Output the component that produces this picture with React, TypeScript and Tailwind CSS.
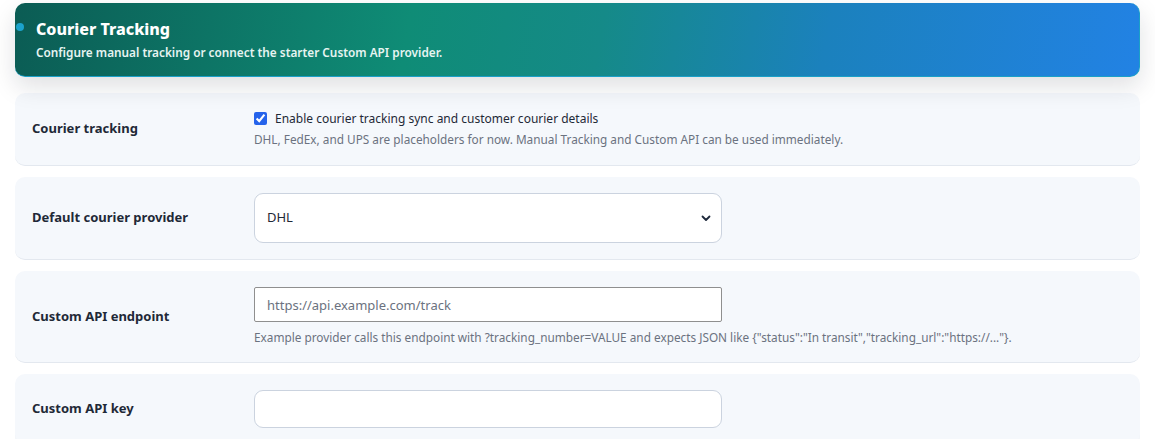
import { useState } from 'react';

const font = { fontFamily: '"Segoe UI", "Noto Sans", "Open Sans", sans-serif' };

function Row({ label, children }: { label: string; children: React.ReactNode }) {
  return (
    <div className="grid grid-cols-[222px_1fr] items-center rounded-[10px] bg-[#f5f8fc] border-b border-[#e3e8ef] px-[17px] py-4">
      <div className="text-[13px] font-bold text-[#1f2937]">{label}</div>
      <div>{children}</div>
    </div>
  );
}

export default function App() {
  const [enabled, setEnabled] = useState(true);
  const [provider, setProvider] = useState('DHL');

  return (
    <div style={font} className="min-h-[439px] bg-white px-[15px] pt-[3px] pb-6">
      <div className="relative rounded-[10px] border-r border-b border-[#1aa0c8] bg-[linear-gradient(100deg,#0b5c54_0%,#0f8c76_35%,#158a88_52%,#1b81bd_72%,#2282e4_100%)] px-[21px] pt-[16px] pb-[15px] shadow-[0_10px_24px_rgba(15,23,42,0.13)]">
        <span className="absolute left-[1px] top-[20px] h-[8px] w-[8px] rounded-full bg-[#1ba3cc]" />
        <h1 className="text-[16px] font-extrabold leading-[20px] text-white">Courier Tracking</h1>
        <p className="mt-[4px] text-[11.8px] font-semibold leading-[18px] text-[#e6f4f1]">
          Configure manual tracking or connect the starter Custom API provider.
        </p>
      </div>

      <div className="mt-[16px] flex flex-col gap-[11px]">
        <Row label="Courier tracking">
          <label className="flex items-center gap-[8px] text-[12px] leading-[19px] text-[#1f2937]">
            <input
              type="checkbox"
              checked={enabled}
              onChange={e => setEnabled(e.target.checked)}
              className="h-[13px] w-[13px] accent-[#2563eb]"
            />
            Enable courier tracking sync and customer courier details
          </label>
          <p className="mt-[2px] text-[11.8px] leading-[19px] text-[#6b7280]">
            DHL, FedEx, and UPS are placeholders for now. Manual Tracking and Custom API can be used immediately.
          </p>
        </Row>

        <Row label="Default courier provider">
          <div className="relative w-[468px]">
            <select
              value={provider}
              onChange={e => setProvider(e.target.value)}
              className="h-[50px] w-full appearance-none rounded-[9px] border border-[#cbd3df] bg-white px-[12px] text-[13px] text-[#1f2937] outline-none"
            >
              <option>DHL</option>
              <option>FedEx</option>
              <option>UPS</option>
              <option>Manual Tracking</option>
              <option>Custom API</option>
            </select>
            <svg className="pointer-events-none absolute right-[11px] top-[21px]" width="10" height="8" viewBox="0 0 10 8" fill="none">
              <path d="M1.5 2.5 5 6l3.5-3.5" stroke="#1e293b" strokeWidth="1.8" strokeLinecap="round" strokeLinejoin="round" />
            </svg>
          </div>
        </Row>

        <Row label="Custom API endpoint">
          <input
            type="text"
            placeholder="https://api.example.com/track"
            className="h-[35px] w-[468px] rounded-[2px] border border-[#8f8f8f] bg-white px-[12px] text-[13px] text-[#1f2937] outline-none placeholder:text-[#6b7280]"
          />
          <p className="mt-[6px] text-[11.8px] leading-[18px] text-[#6b7280]">
            Example provider calls this endpoint with ?tracking_number=VALUE and expects JSON like {'{"status":"In transit","tracking_url":"https://..."}'}.
          </p>
        </Row>

        <Row label="Custom API key">
          <input
            type="password"
            className="h-[38px] w-[468px] rounded-[9px] border border-[#cbd3df] bg-white px-[12px] text-[13px] outline-none"
          />
        </Row>
      </div>
    </div>
  );
}
